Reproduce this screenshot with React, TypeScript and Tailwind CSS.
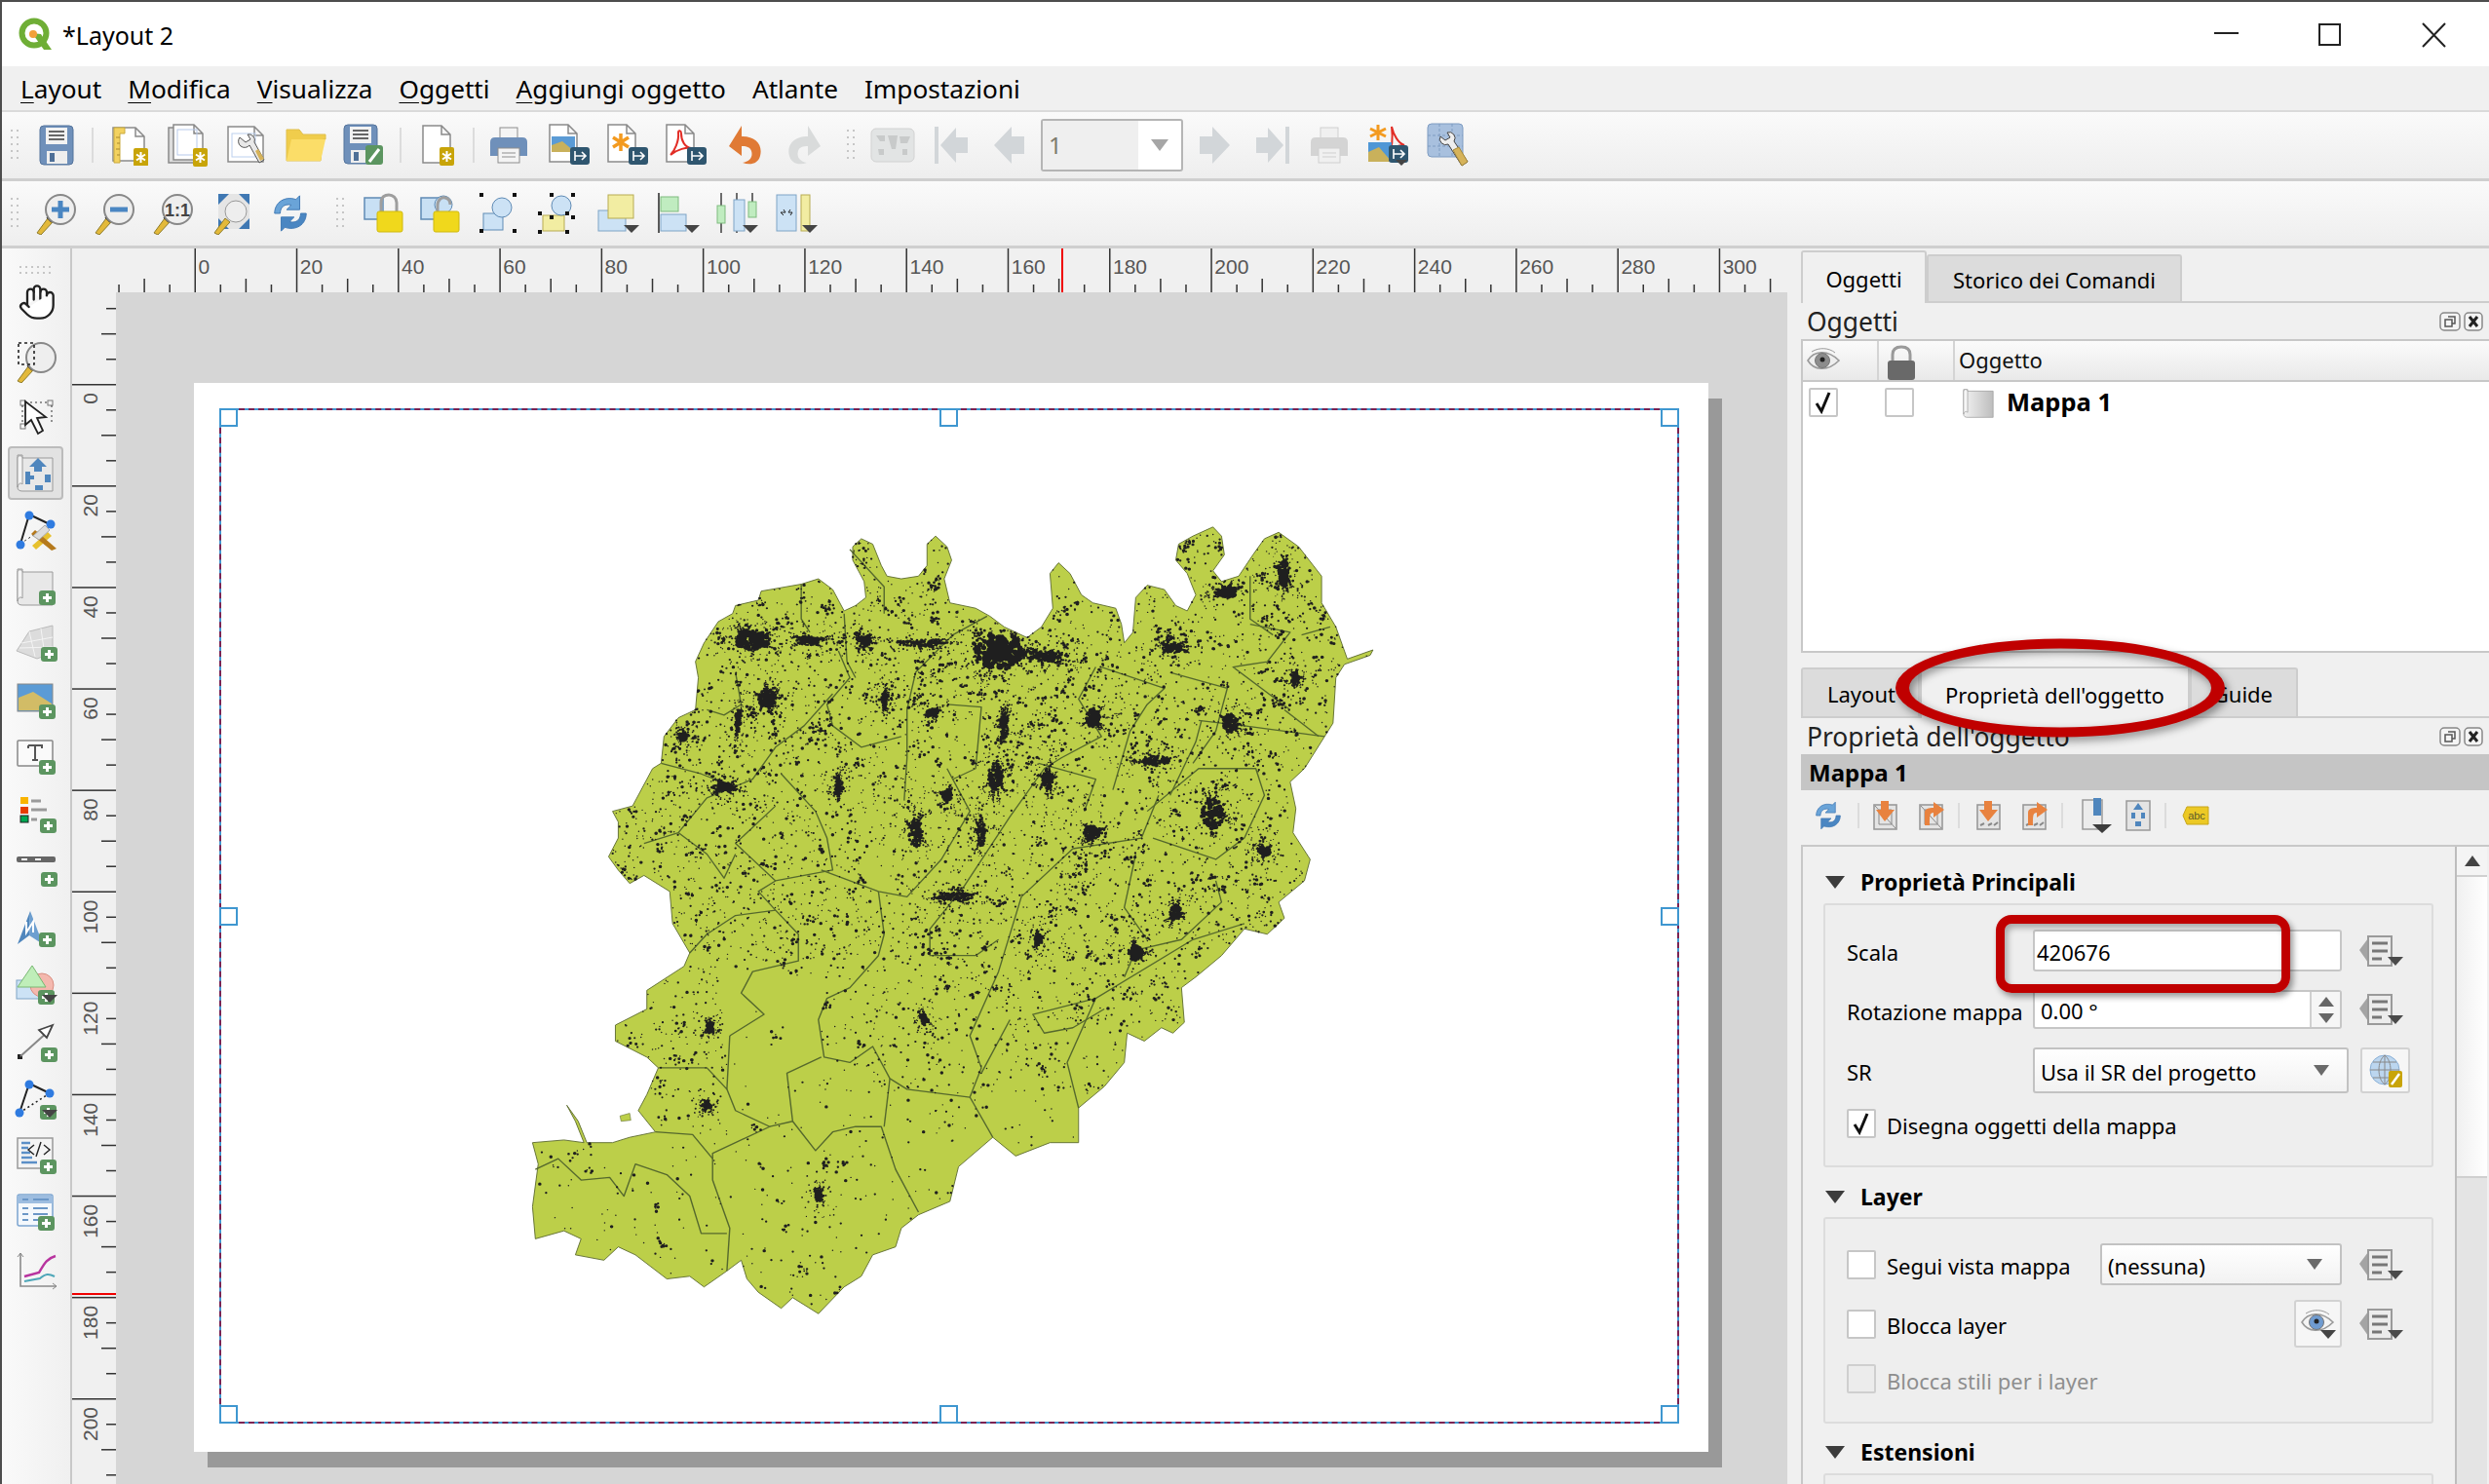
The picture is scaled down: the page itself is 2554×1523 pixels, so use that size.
import React, { useMemo } from "react";
import { Hand } from "lucide-react";

const Svg = ({ w = 44, h = 44, children }: { w?: number; h?: number; children: React.ReactNode }) => (
  <svg width={w} height={h} viewBox={`0 0 ${w} ${h}`} className="block shrink-0">{children}</svg>
);
const Slot = ({ c, children }: { c: string; children?: React.ReactNode }) => (
  <div className={`flex h-full shrink-0 items-center justify-center ${c}`}>{children}</div>
);
const Grip = () => (
  <svg width="8" height="36" viewBox="0 0 8 36" className="block shrink-0">
    {[2, 9, 16, 23, 30].map((y) => (
      <g key={y}><rect x="0" y={y} width="2" height="2" fill="#c6c6c6" /><rect x="6" y={y} width="2" height="2" fill="#c6c6c6" /></g>
    ))}
  </svg>
);
const Sep = () => <div className="h-[36px] w-[2px] bg-[#dcdcdc]" />;

const Doc = ({ x = 3, y = 1, w = 28, h = 38, f = "#fff", s = "#8a8a8a" }: { x?: number; y?: number; w?: number; h?: number; f?: string; s?: string }) => (
  <path d={`M${x} ${y}H${x + w - 9}L${x + w} ${y + 9}V${y + h}H${x}Z M${x + w - 9} ${y}V${y + 9}H${x + w}`} fill={f} stroke={s} strokeWidth="1.5" />
);
const GoldBadge = ({ x = 22, y = 22 }: { x?: number; y?: number }) => (
  <g>
    <rect x={x} y={y} width="15" height="19" rx="2" fill="#c8a408" />
    <path d={`M${x + 7.5} ${y + 4}V${y + 15}M${x + 3} ${y + 6.5}L${x + 12} ${y + 12.5}M${x + 12} ${y + 6.5}L${x + 3} ${y + 12.5}`} stroke="#fff" strokeWidth="2" />
  </g>
);
const ExpBadge = ({ x = 22, y = 24 }: { x?: number; y?: number }) => (
  <g>
    <rect x={x} y={y} width="20" height="18" rx="3" fill="#2f566f" />
    <path d={`M${x + 5} ${y + 4}V${y + 14}M${x + 5} ${y + 9}H${x + 15}M${x + 12} ${y + 5}L${x + 16} ${y + 9}L${x + 12} ${y + 13}`} stroke="#fff" strokeWidth="1.6" fill="none" />
  </g>
);
const Plus = ({ x = 22, y = 22 }: { x?: number; y?: number }) => (
  <g>
    <rect x={x} y={y} width="17" height="15" rx="3" fill="#5c9560" />
    <path d={`M${x + 8.5} ${y + 3}V${y + 12}M${x + 4} ${y + 7.5}H${x + 13}`} stroke="#fff" strokeWidth="3" />
  </g>
);
const DD = ({ x = 30, y = 34, s = 7 }: { x?: number; y?: number; s?: number }) => (
  <path d={`M${x - s} ${y}H${x + s}L${x} ${y + s}Z`} fill="#444" />
);

const SaveBody = ({ dx = 0 }: { dx?: number }) => (
  <g transform={`translate(${dx} 0)`}>
    <rect x="1" y="1" width="34" height="40" rx="4" fill="#6f90ba" stroke="#55749c" />
    <rect x="7" y="3" width="22" height="17" fill="#f2f2f2" />
    <path d="M10 7H26M10 11H26M10 15H26" stroke="#666" strokeWidth="2" />
    <rect x="8" y="27" width="21" height="13" fill="#eee" />
    <rect x="11" y="29" width="5" height="9" fill="#4e6f97" />
  </g>
);
const IconSave = () => <Svg w={37} h={42}><SaveBody /></Svg>;
const IconNewLayout = () => (
  <Svg w={42} h={42}>
    <Doc x={3} y={3} w={32} h={34} />
    <path d="M4 3H15V9H10V39H4Z" fill="#f3d260" stroke="#c9a93b" />
    <path d="M10 13H6M10 19H7M10 25H6M10 31H7" stroke="#a8872b" />
    <GoldBadge x={24} y={24} />
  </Svg>
);
const IconDup = () => (
  <Svg w={44} h={44}>
    <Doc x={1} y={4} w={30} h={36} f="#ddd" />
    <Doc x={6} y={1} w={30} h={36} />
    <rect x="10" y="6" width="20" height="26" fill="none" stroke="#b7c9ea" />
    <GoldBadge x={26} y={25} />
  </Svg>
);
const IconMgr = () => (
  <Svg w={44} h={44}>
    <Doc x={2} y={3} w={36} h={36} />
    <rect x="6" y="10" width="24" height="24" fill="none" stroke="#bcd0ee" />
    <path d="M14 14A6 6 0 0 0 24 22L34 40L39 37L29 19A6 6 0 0 0 22 11L25 16L20 19Z" fill="#e8e8e8" stroke="#555" />
    <path d="M30 28L35 38L39 36L33 26Z" fill="#d6b35a" />
  </Svg>
);
const IconFolder = () => (
  <Svg w={42} h={36}>
    <path d="M1 34V2H14L18 7H41V12H38L36 34Z" fill="#f0cd4c" stroke="#e0bf4b" />
    <path d="M1 34L6 12H41L36 34Z" fill="#fbdd68" />
  </Svg>
);
const IconSaveAs = () => (
  <Svg w={42} h={44}>
    <SaveBody />
    <rect x="23" y="22" width="18" height="20" rx="3" fill="#5c9560" />
    <path d="M27 39L37 26" stroke="#fff" strokeWidth="3" />
  </Svg>
);
const IconNewPage = () => (
  <Svg w={38} h={42}>
    <Doc x={2} y={1} w={28} h={38} />
    <GoldBadge x={19} y={23} />
  </Svg>
);
const Printer = ({ b = "#6f90ba", p = "#f4f4f4", s = "#8e8e8e" }: { b?: string; p?: string; s?: string }) => (
  <Svg w={40} h={38}>
    <rect x="11" y="1" width="18" height="14" fill={p} stroke={s} />
    <path d="M1 16Q1 11 6 11H34Q39 11 39 16V30H1Z" fill={b} />
    <rect x="9" y="22" width="22" height="15" fill={p} stroke={s} />
    <path d="M13 27H27M13 31H27" stroke={s} />
  </Svg>
);
const IconExpImg = () => (
  <Svg w={44} h={44}>
    <Doc x={1} y={1} w={28} h={38} />
    <rect x="3" y="13" width="24" height="16" fill="#5b9bd5" />
    <path d="M3 29V22L14 18L27 29Z" fill="#c9b15b" />
    <ExpBadge x={22} y={24} />
  </Svg>
);
const IconExpSvg = () => (
  <Svg w={44} h={44}>
    <Doc x={1} y={1} w={28} h={38} />
    <path d="M14 10V28M6 14L22 24M22 14L6 24" stroke="#f39a1f" strokeWidth="3.5" />
    <ExpBadge x={22} y={24} />
  </Svg>
);
const IconExpPdf = () => (
  <Svg w={44} h={44}>
    <Doc x={1} y={1} w={28} h={38} />
    <path d="M5 32C9 28 14 18 13 9C13 6 16 7 16 10C16 18 20 24 26 25C22 24 12 26 5 32Z" fill="none" stroke="#e22d26" strokeWidth="2" />
    <ExpBadge x={22} y={24} />
  </Svg>
);
const UndoArrow = ({ f }: { f: string }) => (
  <path d="M1 22L14 1V12C28 12 36 20 33 32C31 40 23 42 15 39C22 38 26 33 24 27C23 23 19 22 14 22V32Z" fill={f} />
);
const IconUndo = () => <Svg w={36} h={42}><UndoArrow f="#e07a35" /></Svg>;
const IconRedo = () => <Svg w={36} h={42}><g transform="translate(36 0) scale(-1 1)"><UndoArrow f="#d9dbdb" /></g></Svg>;
const IconAtlas = () => (
  <Svg w={46} h={36}>
    <rect x="1" y="1" width="44" height="34" rx="5" fill="#e2e4e4" stroke="#d2d2d2" />
    <path d="M6 8H15V14H10ZM18 8H28L26 22H22ZM30 9H41L38 16H31ZM8 22H14V28H9ZM33 22H38V28H33Z" fill="#c8caca" />
  </Svg>
);
const NavShape = ({ d }: { d: string }) => <Svg w={38} h={38}><path d={d} fill="#d2d6d9" /></Svg>;
const IconExpAtlas = () => (
  <Svg w={46} h={44}>
    <path d="M11 1V17M3 5L19 13M19 5L3 13" stroke="#f39a1f" strokeWidth="3" />
    <path d="M22 30C26 24 26 12 25 3C27 12 32 20 38 22C32 22 26 24 22 30Z" fill="none" stroke="#e22d26" strokeWidth="2" />
    <rect x="1" y="19" width="24" height="20" fill="#4f97d6" />
    <path d="M1 39V29L12 24L25 39Z" fill="#c9b15b" />
    <ExpBadge x={22} y={22} />
    <DD x={35} y={37} s={6} />
  </Svg>
);
const IconAtlasCfg = () => (
  <Svg w={46} h={46}>
    <rect x="1" y="1" width="36" height="34" rx="4" fill="#a8c0de" stroke="#7e9cc2" />
    <path d="M1 13H37M1 24H37M13 1V35M26 1V35" stroke="#7e9cc2" strokeDasharray="3 2" />
    <path d="M14 14A6 6 0 0 0 22 22L36 44L42 40L28 19A6 6 0 0 0 21 10L24 15L19 18Z" fill="#eee" stroke="#444" />
    <path d="M27 28L36 44L42 40L33 25Z" fill="#d6b35a" stroke="#a68a3c" />
  </Svg>
);

const Lens = ({ children }: { children?: React.ReactNode }) => (
  <Svg w={44} h={44}>
    <path d="M2 42L13 27L18 31L6 44Z" fill="#e3b93a" stroke="#8d7b2b" />
    <path d="M13 25L18 30" stroke="#111" strokeWidth="4" />
    <circle cx="26" cy="18" r="15" fill="#eee" stroke="#888" strokeWidth="2" />
    {children}
  </Svg>
);
const IconFull = () => (
  <Svg w={44} h={44}>
    <path d="M6 2H38V38H6Z" fill="#e5e5e5" />
    <path d="M6 2H17L6 13ZM38 2H27L38 13ZM6 38H17L6 27ZM38 38H27L38 27Z" fill="#3f78b3" />
    <path d="M2 42L13 27L18 31L6 44Z" fill="#e3b93a" stroke="#8d7b2b" />
    <circle cx="24" cy="20" r="11" fill="#eee" stroke="#999" />
  </Svg>
);
const Refresh = ({ s = 42 }: { s?: number }) => (
  <svg width={s} height={s} viewBox="0 0 44 44" className="block shrink-0">
    <path d="M5 22C5 10 16 3 28 7L32 3V18H18L23 13C15 11 11 16 11 22Z" fill="#6aa4d8" stroke="#3f78b3" />
    <path d="M39 22C39 34 28 41 16 37L12 41V26H26L21 31C29 33 33 28 33 22Z" fill="#4a86c2" stroke="#3f78b3" />
  </svg>
);
const IconLock = ({ open = false }: { open?: boolean }) => (
  <Svg w={44} h={44}>
    <rect x="2" y="6" width="19" height="22" fill="#c8e0f4" stroke="#5f8bb5" strokeWidth="1.5" />
    {open ? <circle cx="25" cy="13" r="9" fill="#c8e0f4" stroke="#5f8bb5" /> : null}
    <path d={open ? "M19 22V14C19 8 23 5 27 6C31 7 32 10 32 13" : "M19 22V11C19 5 23 3 27 3C31 3 35 6 35 11V22"} fill="none" stroke="#9e9e9e" strokeWidth="3" />
    <rect x="15" y="20" width="26" height="21" rx="2" fill="#f0d81c" stroke="#cfb90e" />
  </Svg>
);
const Corners = ({ x0, y0, x1, y1 }: { x0: number; y0: number; x1: number; y1: number }) => (
  <g fill="#111">
    {[[x0, y0], [x1, y0], [x0, y1], [x1, y1]].map(([x, y], i) => <rect key={i} x={x - 2} y={y - 2} width="4" height="4" />)}
  </g>
);
const IconGroup = () => (
  <Svg w={44} h={44}>
    <rect x="6" y="22" width="20" height="17" fill="#cce2f5" stroke="#5f8bb5" />
    <circle cx="25" cy="16" r="10" fill="#cce2f5" stroke="#5f8bb5" />
    <Corners x0={4} y0={3} x1={38} y1={40} />
  </Svg>
);
const IconUngroup = () => (
  <Svg w={44} h={44}>
    <rect x="5" y="24" width="22" height="16" fill="#f2eda2" stroke="#b7ab52" />
    <circle cx="24" cy="14" r="10" fill="#cce2f5" stroke="#5f8bb5" />
    <Corners x0={14} y0={3} x1={36} y1={26} />
    <Corners x0={2} y0={22} x1={30} y1={41} />
  </Svg>
);
const IconRaise = () => (
  <Svg w={46} h={44}>
    <rect x="2" y="19" width="28" height="21" fill="#cce2f5" stroke="#7ea4c6" />
    <rect x="12" y="3" width="26" height="24" fill="#f2eda2" stroke="#b7ab52" />
    <DD x={36} y={34} s={8} />
  </Svg>
);
const IconAlign = () => (
  <Svg w={46} h={44}>
    <path d="M2 1V42" stroke="#333" strokeWidth="1.6" />
    <rect x="4" y="5" width="18" height="15" fill="#c0ecc0" stroke="#7fbb7f" />
    <rect x="4" y="23" width="26" height="17" fill="#cce2f5" stroke="#7ea4c6" />
    <DD x={36} y={34} s={8} />
  </Svg>
);
const IconDist = () => (
  <Svg w={46} h={44}>
    <path d="M6 1V42M22 1V42M38 1V25" stroke="#333" strokeWidth="1.4" />
    <rect x="2" y="14" width="8" height="18" fill="#c0ecc0" stroke="#7fbb7f" />
    <rect x="19" y="8" width="11" height="32" fill="#cce2f5" stroke="#7ea4c6" />
    <rect x="34" y="10" width="8" height="16" fill="#c0ecc0" stroke="#7fbb7f" />
    <DD x={36} y={34} s={8} />
  </Svg>
);
const IconResize = () => (
  <Svg w={46} h={44}>
    <rect x="2" y="3" width="20" height="37" fill="#cce2f5" stroke="#7ea4c6" />
    <rect x="27" y="3" width="9" height="37" fill="#f2eda2" stroke="#b7ab52" />
    <path d="M6 21H11L9 18M18 21H14L16 18M6 21L9 24M18 21L16 24" stroke="#222" fill="none" />
    <DD x={36} y={34} s={8} />
  </Svg>
);

const Scroll = () => (
  <g>
    <path d="M7 2H2V35C2 38 4 39 7 39H38V5H7Z" fill="#e8e8e8" stroke="#9a9a9a" />
    <path d="M2 5C2 2 7 2 7 5V32C5 30 3 31 2 35Z" fill="#f4f4f4" stroke="#9a9a9a" />
  </g>
);
const IconSelect = () => (
  <Svg w={38} h={40}>
    <rect x="2" y="2" width="5" height="5" fill="none" stroke="#777" />
    <rect x="30" y="2" width="5" height="5" fill="none" stroke="#777" />
    <rect x="2" y="26" width="5" height="5" fill="none" stroke="#777" />
    <path d="M7 4H30M34 7V26M4 7V26" stroke="#333" strokeDasharray="2 3" />
    <path d="M7 3V27L13 22L20 36L25 33L19 20L28 19Z" fill="#fff" stroke="#222" strokeWidth="1.8" />
  </Svg>
);
const IconMove = () => (
  <Svg w={40} h={40}>
    <Scroll />
    <path d="M23 5L32 14H27V19H19V14H14Z" fill="#4f86bd" />
    <path d="M10 19H15V23H19V27H15V32H10Z" fill="#4f86bd" />
    <rect x="30" y="22" width="6" height="8" fill="#4f86bd" />
    <rect x="20" y="33" width="8" height="5" fill="#4f86bd" />
  </Svg>
);
const IconEditNodes = () => (
  <Svg w={44} h={44}>
    <path d="M14 4L5 34M14 4L35 14" stroke="#222" strokeWidth="2" />
    <path d="M5 34L35 14" stroke="#222" strokeDasharray="2 3" />
    <circle cx="14" cy="5" r="4.5" fill="#2f7be0" />
    <circle cx="36" cy="14" r="4.5" fill="#2f7be0" />
    <circle cx="5" cy="35" r="4.5" fill="#2f7be0" />
    <path d="M17 36L33 22L37 26L21 40Z" fill="#e7c12e" />
    <path d="M20 20L42 39L37 41L16 24Z" fill="#b5791c" />
    <path d="M18 26L30 15L35 20L24 30Z" fill="#ddd" stroke="#aaa" />
  </Svg>
);
const IconAddMap = () => <Svg w={44} h={44}><Scroll /><Plus x={24} y={24} /></Svg>;
const IconAdd3d = () => (
  <Svg w={44} h={44}>
    <path d="M1 28L14 8L38 2V30L22 36Z" fill="#dcdcdc" stroke="#bbb" />
    <path d="M14 8L20 34M26 5L30 33M6 20L38 14M4 25L38 24" stroke="#f4f4f4" />
    <Plus x={26} y={24} />
  </Svg>
);
const IconAddPic = () => (
  <Svg w={44} h={44}>
    <rect x="2" y="3" width="36" height="28" fill="#5b9bd5" stroke="#888" />
    <path d="M3 30V17L18 11L37 23V30Z" fill="#d2bc66" />
    <Plus x={24} y={24} />
  </Svg>
);
const IconAddText = () => (
  <Svg w={44} h={44}>
    <rect x="2" y="3" width="36" height="26" rx="1" fill="#fafafa" stroke="#888" strokeWidth="1.5" />
    <path d="M13 8H27V11M20 8V23M17 23H23M13 8V11" stroke="#555" strokeWidth="2" fill="none" />
    <Plus x={24} y={23} />
  </Svg>
);
const IconLegend = () => (
  <Svg w={44} h={40}>
    <rect x="5" y="1" width="8" height="7" fill="#f9b400" />
    <rect x="5" y="11" width="8" height="7" fill="#e63c00" />
    <rect x="5" y="20" width="8" height="7" fill="#00a651" stroke="#222" />
    <path d="M16 5H26M16 14H32M16 24H22" stroke="#9a9a9a" strokeWidth="3" />
    <Plus x={25} y={23} />
  </Svg>
);
const IconScale = () => (
  <Svg w={44} h={42}>
    <rect x="1" y="4" width="40" height="6" rx="2" fill="#666" />
    <path d="M6 7H12M20 7H26" stroke="#fff" strokeWidth="2" />
    <Plus x={26} y={20} />
  </Svg>
);
const IconNorth = () => (
  <Svg w={44} h={42}>
    <path d="M15 2L2 36L14 27Z" fill="#4f86bd" />
    <path d="M15 2L28 36L14 27Z" fill="#6d9fd0" />
    <path d="M11 13V24L18 13V24" stroke="#fff" strokeWidth="2" fill="none" />
    <Plus x={24} y={24} />
  </Svg>
);
const IconShape = () => (
  <Svg w={46} h={44}>
    <rect x="2" y="16" width="32" height="19" fill="#cce2f5" stroke="#7ea4c6" />
    <circle cx="28" cy="21" r="12" fill="#f4b8ae" stroke="#d88d80" />
    <path d="M18 1L3 23H32Z" fill="#bfeeb9" stroke="#79b873" />
    <Plus x={24} y={26} />
    <DD x={36} y={31} s={8} />
  </Svg>
);
const IconArrow = () => (
  <Svg w={44} h={42}>
    <rect x="2" y="32" width="5" height="5" fill="#222" />
    <path d="M5 34L34 8" stroke="#888" strokeWidth="2" />
    <path d="M38 2L24 7L32 15Z" fill="#fff" stroke="#444" strokeWidth="1.8" />
    <Plus x={26} y={25} />
  </Svg>
);
const IconNodes = () => (
  <Svg w={46} h={42}>
    <path d="M15 4L5 34M15 4L36 14" stroke="#222" strokeWidth="2" />
    <path d="M5 34L36 14" stroke="#222" strokeDasharray="2 3" strokeWidth="1.6" />
    <circle cx="15" cy="5" r="4.5" fill="#2f7be0" />
    <circle cx="36" cy="14" r="4.5" fill="#2f7be0" />
    <circle cx="5" cy="34" r="4.5" fill="#2f7be0" />
    <Plus x={26} y={26} />
    <DD x={36} y={31} s={8} />
  </Svg>
);
const IconHtml = () => (
  <Svg w={44} h={42}>
    <rect x="2" y="2" width="36" height="31" fill="#f4f4f4" stroke="#999" strokeWidth="1.5" />
    <path d="M6 7H15M6 12H13M6 17H15M6 22H17M6 27H22" stroke="#5b8fc7" strokeWidth="2.5" />
    <path d="M19 9L13 14L19 19M29 9L35 14L29 19M26 6L21 21" fill="none" stroke="#222" strokeWidth="1.4" />
    <Plus x={25} y={24} />
  </Svg>
);
const IconTable = () => (
  <Svg w={44} h={42}>
    <rect x="2" y="2" width="36" height="32" rx="2" fill="#f4f8fc" stroke="#7ba4d0" strokeWidth="1.5" />
    <rect x="2" y="3" width="36" height="8" fill="#9dbde0" />
    <path d="M7 7H13M18 7H34M7 16H13M18 16H33M7 22H13M18 22H33M7 28H13M18 28H25" stroke="#6b97c7" strokeWidth="2" />
    <Plus x={23} y={24} />
  </Svg>
);
const IconChart = () => (
  <Svg w={44} h={40}>
    <path d="M5 2V36H42" fill="none" stroke="#8a8a8a" strokeWidth="1.6" />
    <path d="M2 6L5 2L8 6M38 33L42 36L38 39" fill="none" stroke="#8a8a8a" />
    <path d="M9 26L24 22C29 14 31 8 41 5" fill="none" stroke="#b8349f" strokeWidth="2.4" />
    <path d="M9 31L25 28C31 23 34 23 40 26" fill="none" stroke="#4da6b8" strokeWidth="2" />
  </Svg>
);

const MiniFrame = ({ mode }: { mode: number }) => (
  <Svg w={30} h={32}>
    <rect x="3" y="5" width="23" height="25" fill="#e4e4e4" stroke="#999" strokeWidth="1.6" />
    {mode < 2 ? <path d="M4 6L25 29M8 10H21V25H8Z" fill="none" stroke="#8a8a8a" /> : <path d="M6 26L10 24M14 26L18 24M20 26L24 23" stroke="#888" strokeWidth="2" />}
    {mode % 2 === 0
      ? <path d="M10 1H18V10H24L14 22L5 10H10Z" fill="#e8823f" />
      : <path d="M8 26V13C8 9 12 8 17 8V2L28 10L17 18V13C13 13 13 16 13 26Z" fill="#e8823f" />}
  </Svg>
);
const Override = () => (
  <Svg w={47} h={36}>
    <path d="M1 17L10 5V30Z" fill="#a4a4a4" />
    <path d="M10 3H34V33H10Z" fill="#ececec" stroke="#9a9a9a" strokeWidth="2" />
    <path d="M14 10H30M14 18H30M14 26H24" stroke="#777" strokeWidth="3" />
    <path d="M30 24H46L38 33Z" fill="#4a4a4a" />
  </Svg>
);
const Eye = ({ iris, bg }: { iris: string; bg: string }) => (
  <g>
    <path d="M1 14C7 4 21 2 33 14C21 26 7 24 1 14Z" fill={bg} stroke="#9a9a9a" strokeWidth="1.6" />
    <path d="M5 5C13 0 23 1 29 6" fill="none" stroke="#9a9a9a" />
    <circle cx="16" cy="14" r="7.5" fill={iris} stroke="#777" />
    <circle cx="16" cy="13" r="2.5" fill="#222" />
  </g>
);
const Check = ({ checked = false, disabled = false }: { checked?: boolean; disabled?: boolean }) => (
  <div className={`flex h-[30px] w-[30px] shrink-0 items-center justify-center rounded-[2px] border-2 ${disabled ? "border-[#cfcfcf] bg-[#ececec]" : "border-[#c6c6c6] bg-white"}`}>
    {checked ? <svg width="18" height="24" viewBox="0 0 18 24"><path d="M2 13L7 21L15 2" fill="none" stroke="#111" strokeWidth="3" /></svg> : null}
  </div>
);
const Tri = ({ c = "#444", s = 8 }: { c?: string; s?: number }) => (
  <svg width={s * 2} height={s + 3} viewBox={`0 0 ${s * 2} ${s + 3}`} className="block shrink-0"><path d={`M0 0H${s * 2}L${s} ${s + 3}Z`} fill={c} /></svg>
);
const SectionHead = ({ label, c }: { label: string; c: string }) => (
  <div className={`flex items-center pl-[23px] ${c}`}>
    <Tri c="#3c3c3c" s={10} />
    <span className="ml-[16px] text-[23px] font-bold leading-none text-black">{label}</span>
  </div>
);
const Combo = ({ label, c }: { label: string; c: string }) => (
  <div className={`flex items-center justify-between rounded-[3px] border-2 border-[#c2c2c2] bg-gradient-to-b from-white to-[#f2f2f2] pl-[6px] pr-[18px] ${c}`}>
    <span className="pt-[2px] text-[22px] leading-none text-black">{label}</span>
    <Tri c="#6a6a6a" s={8} />
  </div>
);
const DockTitle = ({ label }: { label: string }) => (
  <div className="flex h-[37px] shrink-0 items-center justify-between pl-[6px] pr-[6px]">
    <span className="pt-[2px] text-[26.4px] leading-none text-[#222]">{label}</span>
    <div className="flex gap-[3px]">
      <svg width="22" height="20" viewBox="0 0 22 20"><rect x="1" y="1" width="20" height="18" rx="4" fill="#f4f4f4" stroke="#888" strokeWidth="1.5" /><path d="M9 5H16V12H13M6 8H13V15H6Z" fill="none" stroke="#555" strokeWidth="1.5" /></svg>
      <svg width="20" height="20" viewBox="0 0 20 20"><rect x="1" y="1" width="18" height="18" rx="4" fill="#f4f4f4" stroke="#888" strokeWidth="1.5" /><path d="M6 5L14 15M14 5L6 15" stroke="#222" strokeWidth="3" /></svg>
    </div>
  </div>
);

const topMajor = Array.from({ length: 16 }, (_, i) => i * 20);
const TopRuler = () => {
  const ticks: React.ReactNode[] = [];
  for (let mm = -15; mm <= 311; mm += 5) {
    const x = 80.5 + mm * 5.214;
    if (mm % 20 === 0) continue;
    const h = mm % 10 === 0 ? 14 : 8;
    ticks.push(<rect key={mm} x={x} y={45 - h} width="1.5" height={h} fill="#333" />);
  }
  return (
    <svg width="1713" height="45" viewBox="0 0 1713 45" className="block" fontFamily="Liberation Sans, sans-serif">
      {ticks}
      {topMajor.map((mm) => {
        const x = 80.5 + mm * 5.214;
        return (
          <g key={mm}>
            <rect x={x} y="0" width="1.5" height="45" fill="#333" />
            <text x={x + 4} y="26" fontSize="21" fill="#555">{mm}</text>
          </g>
        );
      })}
      <rect x="970" y="0" width="2" height="45" fill="#f00000" />
    </svg>
  );
};
const LeftRuler = () => {
  const ticks: React.ReactNode[] = [];
  for (let mm = -15; mm <= 215; mm += 5) {
    const y = 94 + mm * 5.205;
    if (mm % 20 === 0) {
      ticks.push(<rect key={mm} x="0" y={y} width="45" height="1.5" fill="#333" />);
      if (mm >= 0) ticks.push(<text key={`t${mm}`} transform={`translate(26 ${y + 9}) rotate(-90)`} textAnchor="end" fontSize="21" fill="#555">{mm}</text>);
    } else {
      const w = mm % 10 === 0 ? 15 : 10;
      ticks.push(<rect key={mm} x={45 - w} y={y} width={w} height="1.5" fill="#333" />);
    }
  }
  return (
    <svg width="45" height="1223" viewBox="0 0 45 1223" className="block" fontFamily="Liberation Sans, sans-serif">
      {ticks}
      <rect x="0" y="1027" width="45" height="2" fill="#f00000" />
    </svg>
  );
};

const OUTLINE: [number, number][] = [[330,290],[345,255],[370,215],[395,200],[400,185],[440,175],[445,158],[515,145],[545,135],[570,155],[590,195],[610,185],[628,170],[625,140],[605,100],[605,75],[620,60],[640,70],[655,110],[665,130],[690,135],[720,130],[735,110],[735,70],[750,55],[770,75],[778,100],[765,135],[775,180],[820,190],[845,205],[870,225],[910,245],[935,225],[955,190],[950,125],[965,105],[985,125],[1005,165],[1025,180],[1065,190],[1075,220],[1080,255],[1095,235],[1100,170],[1120,147],[1150,155],[1170,185],[1190,195],[1205,165],[1190,125],[1170,100],[1175,70],[1200,55],[1235,38],[1250,55],[1255,90],[1235,120],[1250,140],[1280,130],[1305,90],[1325,60],[1350,48],[1385,75],[1425,130],[1425,180],[1450,225],[1465,270],[1470,285],[1515,268],[1510,278],[1465,295],[1450,320],[1445,405],[1395,490],[1370,515],[1380,565],[1375,610],[1405,660],[1395,700],[1350,740],[1360,770],[1330,800],[1290,790],[1250,840],[1205,880],[1180,900],[1185,965],[1165,985],[1145,975],[1115,1000],[1085,985],[1080,1040],[1045,1085],[1000,1125],[1000,1190],[950,1190],[890,1215],[850,1180],[790,1235],[775,1300],[720,1325],[690,1350],[680,1385],[640,1400],[620,1440],[590,1460],[545,1510],[500,1480],[480,1500],[440,1470],[420,1445],[410,1410],[385,1430],[345,1460],[320,1440],[280,1445],[225,1400],[195,1385],[170,1410],[120,1400],[130,1370],[100,1355],[50,1370],[45,1310],[55,1230],[45,1190],[100,1185],[135,1190],[120,1150],[105,1120],[125,1150],[140,1190],[185,1190],[215,1180],[260,1170],[230,1130],[245,1100],[265,1050],[245,1030],[190,1000],[190,970],[245,940],[245,905],[310,860],[320,835],[290,780],[285,720],[240,690],[215,705],[195,680],[178,655],[195,620],[195,590],[185,570],[220,560],[255,490],[270,480],[275,430],[300,395],[330,380],[335,320]];
const LINES = [
  "515,145 515,210 530,235","590,200 595,290 610,320","840,205 780,240 715,310 700,380 700,470 695,550","570,350 520,410 470,450 430,510 350,545 300,610 240,630","270,480 340,500 400,525","400,310 410,370 380,390 350,380","580,270 600,320 560,370 570,410 620,450 690,430","480,500 540,570 560,620 570,680 470,700 400,630 470,560","300,610 350,650 380,695 400,650","470,700 440,720 470,755 510,800 510,850 430,870 410,910 450,950 390,990","470,755 400,765 350,800 320,835","1030,300 1000,360 1040,430 970,470 940,490 880,580 800,710 740,790 740,840 820,840 860,810","650,720 660,800 650,840 600,900 560,920 545,960 555,1030 600,1040 640,1010 670,1070 700,1090 810,1105 830,1050 810,990 860,870 900,730 990,640 1110,620 1140,540","390,990 385,1090 350,1050 265,1050","385,1090 400,1130 460,1160 360,1210 360,1260 390,1350 385,1430","260,1170 325,1175 360,1220","50,1240 90,1220 130,1260 180,1255 205,1290 225,1230 280,1250 320,1290 340,1360 385,1360","460,1160 500,1150 490,1060 550,1030","500,1150 540,1205 570,1170 610,1160 655,1160 680,1240 720,1320","670,1070 660,1160","810,1105 850,1180","1045,940 990,975 940,985 920,950 1030,920 1200,810 1290,780","1030,920 980,1040 1000,1125","880,960 840,1040 830,1060","1240,700 1250,740 1180,810 1100,830 1080,880","1130,620 1240,660 1290,620 1325,540 1310,490 1210,490 1120,570","1100,650 1080,750 1120,810","1040,300 1150,340 1120,370 1090,420 1060,530","1160,310 1260,340 1240,420 1200,480","1210,400 1290,410 1430,430","1360,380 1420,430","1300,220 1370,235 1330,290 1270,300 1370,380","1440,225 1390,240","770,370 830,375 820,490 780,510","930,480 1030,510 1010,570","1215,400 1205,440 1160,540","1300,130 1300,210 1340,240","600,80 660,150 660,200","770,490 810,570 760,660 700,730 650,720 550,680",
];
const CLUSTERS: [number, number, number, number][] = [[430,250,30,20],[530,250,24,9],[860,270,48,35],[935,280,48,12],[720,255,42,7],[625,250,12,8],[455,360,16,18],[380,525,22,9],[580,525,6,18],[715,610,12,28],[785,730,30,8],[830,610,7,28],[855,505,13,26],[945,510,10,20],[1025,610,16,13],[1025,395,13,18],[1135,475,26,9],[1235,575,20,28],[1265,405,13,18],[1165,265,18,9],[1260,160,18,11],[1360,125,11,26],[1100,835,13,15],[1170,760,10,15],[1325,645,11,9],[355,975,7,11],[730,960,5,11],[350,1120,6,7],[545,1290,6,11],[930,810,7,11],[770,540,9,11],[660,360,5,15],[745,385,11,7],[405,400,4,25],[1380,320,6,9],[310,430,6,9],[870,410,7,25]];

const MapDrawing = () => {
  const { outline, dots } = useMemo(() => {
    let seed = 12345;
    const rnd = () => { seed = (seed * 1664525 + 1013904223) % 4294967296; return seed / 4294967296; };
    const inside = (x: number, y: number) => {
      let c = false;
      for (let i = 0, j = OUTLINE.length - 1; i < OUTLINE.length; j = i++) {
        const [xi, yi] = OUTLINE[i];
        const [xj, yj] = OUTLINE[j];
        if (yi > y !== yj > y && x < ((xj - xi) * (y - yi)) / (yj - yi) + xi) c = !c;
      }
      return c;
    };
    const circ = (x: number, y: number, r: number) => {
      const q = +r.toFixed(1);
      return `M${(x - q).toFixed(1)} ${y.toFixed(1)}a${q} ${q} 0 1 0 ${2 * q} 0a${q} ${q} 0 1 0 ${-2 * q} 0`;
    };
    const parts: string[] = [];
    for (let i = 0; i < 13000; i++) {
      const x = 40 + rnd() * 1480;
      const y = 40 + rnd() * 1470;
      let keep = y < 500 ? 0.85 : y < 850 ? 0.9 : y < 1100 ? 0.6 : 0.18;
      if (x > 380 && x < 550 && y > 880 && y < 1110) keep = 0.05;
      if (rnd() > keep || !inside(x, y)) continue;
      const k = rnd();
      const r = k < 0.6 ? 1.3 : k < 0.9 ? 2 : 3;
      parts.push(circ(x, y, r));
      if (rnd() < (y < 500 ? 0.1 : 0.05)) {
        const n = 3 + Math.floor(rnd() * 4);
        for (let j = 0; j < n; j++) {
          const px = x + (rnd() - 0.5) * 18;
          const py = y + (rnd() - 0.5) * 18;
          if (inside(px, py)) parts.push(circ(px, py, 1.6 + rnd() * 1.6));
        }
      }
    }
    for (const [cx, cy, rx, ry] of CLUSTERS) {
      const base = Math.min(rx, ry);
      for (let i = 0; i < 70; i++) {
        const a = rnd() * Math.PI * 2;
        const d = Math.sqrt(rnd());
        parts.push(circ(cx + Math.cos(a) * d * rx, cy + Math.sin(a) * d * ry, 1.6 + base * 0.24 * (1 - d * 0.7) * (0.5 + rnd())));
      }
      const arms = 5 + Math.floor(rnd() * 4);
      for (let m = 0; m < arms; m++) {
        const a = rnd() * Math.PI * 2;
        const len = 0.9 + rnd() * 0.9;
        for (let t = 0; t < 14; t++) {
          const u = (t / 14) * len + 0.5;
          const x = cx + Math.cos(a) * u * rx + (rnd() - 0.5) * 4;
          const y = cy + Math.sin(a) * u * ry + (rnd() - 0.5) * 4;
          if (inside(x, y)) parts.push(circ(x, y, 3.2 - u * 1.1 > 1 ? 3.2 - u * 1.1 : 1));
        }
      }
      for (let i = 0; i < 40; i++) {
        const a = rnd() * Math.PI * 2;
        const d = 1 + rnd() * rnd() * 4;
        const x = cx + Math.cos(a) * (rx * d + 6);
        const y = cy + Math.sin(a) * (ry * d + 6);
        if (inside(x, y)) parts.push(circ(x, y, 0.9 + rnd() * 1.1));
      }
    }
    return { outline: OUTLINE.map((p) => p.join(",")).join(" "), dots: parts.join("") };
  }, []);
  return (
    <svg viewBox="0 0 1568 1568" preserveAspectRatio="none" className="absolute left-[321px] top-[127px] h-[860px] w-[920px]">
      <polygon points={outline} fill="#bccf49" stroke="#5d6b30" strokeWidth="1.6" strokeLinejoin="round" />
      {LINES.map((l, i) => <polyline key={i} points={l} fill="none" stroke="#55682d" strokeWidth="2.4" strokeLinejoin="round" />)}
      <path d={dots} fill="#1f1f1f" />
      <polygon points="198,1140 215,1135 217,1148 200,1150" fill="#bccf49" stroke="#5d6b30" />
    </svg>
  );
};

const Handle = ({ c }: { c: string }) => <div className={`absolute h-[19px] w-[19px] border-2 border-[#3f97d0] ${c}`} />;

const Menu = ({ hot, rest }: { hot: string; rest: string }) => (
  <span><span className="underline decoration-1 underline-offset-[4px]">{hot}</span>{rest}</span>
);

export default function App() {
  return (
    <div className="relative flex h-[1523px] w-[2554px] flex-col overflow-hidden bg-[#f0f0f0] font-['Noto_Sans','Open_Sans',sans-serif] text-black">
      {/* title bar */}
      <div className="flex h-[68px] shrink-0 items-center bg-white pl-[18px] pt-[4px]">
        <svg width="36" height="36" viewBox="0 0 36 36" className="shrink-0">
          <circle cx="17" cy="16" r="12.5" fill="none" stroke="#6fae36" strokeWidth="6" />
          <path d="M15 16L27 33H35L24 17Z" fill="#6fae36" />
          <circle cx="16" cy="17" r="4" fill="#f2a13a" />
        </svg>
        <span className="ml-[10px] text-[25px] leading-none">*Layout 2</span>
        <div className="flex-1" />
        <svg width="240" height="30" viewBox="0 0 240 30" className="mr-[42px]" fill="none" stroke="#222" strokeWidth="2">
          <path d="M0 13H25" />
          <rect x="108" y="4" width="21" height="21" />
          <path d="M214 3L237 27M237 3L214 27" />
        </svg>
      </div>
      {/* menu */}
      <div className="flex h-[47px] shrink-0 items-center gap-[27px] border-b-2 border-[#dadada] pl-[21px] pt-[2px] text-[26.2px] leading-none">
        <Menu hot="L" rest="ayout" />
        <Menu hot="M" rest="odifica" />
        <Menu hot="V" rest="isualizza" />
        <Menu hot="O" rest="ggetti" />
        <Menu hot="A" rest="ggiungi oggetto" />
        <span>Atlante</span>
        <span>Impostazioni</span>
      </div>
      {/* toolbar 1 */}
      <div className="flex h-[71px] shrink-0 items-center border-b-[3px] border-[#cfcfcf] bg-gradient-to-b from-[#fafafa] to-[#eeeeee]">
        <Slot c="w-[30px]"><Grip /></Slot>
        <Slot c="w-[56px]"><IconSave /></Slot>
        <Slot c="w-[18px]"><Sep /></Slot>
        <Slot c="w-[60px]"><IconNewLayout /></Slot>
        <Slot c="w-[59px]"><IconDup /></Slot>
        <Slot c="w-[61px]"><IconMgr /></Slot>
        <Slot c="w-[59px]"><IconFolder /></Slot>
        <Slot c="w-[60px]"><IconSaveAs /></Slot>
        <Slot c="w-[16px]"><Sep /></Slot>
        <Slot c="w-[64px]"><IconNewPage /></Slot>
        <Slot c="w-[6px]"><Sep /></Slot>
        <Slot c="w-[66px]"><Printer /></Slot>
        <Slot c="w-[60px]"><IconExpImg /></Slot>
        <Slot c="w-[60px]"><IconExpSvg /></Slot>
        <Slot c="w-[60px]"><IconExpPdf /></Slot>
        <Slot c="w-[60px]"><IconUndo /></Slot>
        <Slot c="w-[60px]"><IconRedo /></Slot>
        <Slot c="w-[36px]"><Grip /></Slot>
        <Slot c="w-[50px]"><IconAtlas /></Slot>
        <Slot c="w-[70px]"><NavShape d="M2 0H6V38H2ZM8 19L24 1V11H36V27H24V37Z" /></Slot>
        <Slot c="w-[50px]"><NavShape d="M3 19L21 0V10H34V28H21V38Z" /></Slot>
        <div className="ml-[7px] flex h-[54px] w-[146px] shrink-0 rounded-[3px] border-2 border-[#b5b5b5] bg-white">
          <div className="flex flex-1 items-center bg-[#efefef] pl-[6px] text-[24px] leading-none text-[#7d7a6c]">1</div>
          <div className="flex w-[44px] items-center justify-center"><Tri c="#a6a6a6" s={9} /></div>
        </div>
        <Slot c="w-[64px]"><NavShape d="M35 19L17 0V10H4V28H17V38Z" /></Slot>
        <Slot c="w-[56px]"><NavShape d="M32 0H36V38H32ZM30 19L14 1V11H2V27H14V37Z" /></Slot>
        <Slot c="w-[60px]"><Printer b="#d4d4d4" p="#f0f0f0" s="#cfcfcf" /></Slot>
        <Slot c="w-[64px]"><IconExpAtlas /></Slot>
        <Slot c="w-[58px]"><IconAtlasCfg /></Slot>
      </div>
      {/* toolbar 2 */}
      <div className="flex h-[69px] shrink-0 items-center border-b-[3px] border-[#cfcfcf] bg-gradient-to-b from-[#fafafa] to-[#eeeeee]">
        <Slot c="w-[30px]"><Grip /></Slot>
        <Slot c="w-[56px]"><Lens><path d="M26 9V27M17 18H35" stroke="#4a86c2" strokeWidth="5" /></Lens></Slot>
        <Slot c="w-[64px]"><Lens><path d="M17 18H35" stroke="#4a86c2" strokeWidth="5" /></Lens></Slot>
        <Slot c="w-[56px]"><Lens><text x="26" y="25" textAnchor="middle" fontSize="18" fontWeight="700" fill="#444" fontFamily="Liberation Sans, sans-serif">1:1</text></Lens></Slot>
        <Slot c="w-[68px]"><IconFull /></Slot>
        <Slot c="w-[48px]"><Refresh /></Slot>
        <Slot c="w-[54px]"><Grip /></Slot>
        <Slot c="w-[36px]"><IconLock /></Slot>
        <Slot c="w-[80px]"><IconLock open /></Slot>
        <Slot c="w-[40px]"><IconGroup /></Slot>
        <Slot c="w-[84px]"><IconUngroup /></Slot>
        <Slot c="w-[38px]"><IconRaise /></Slot>
        <Slot c="w-[86px]"><IconAlign /></Slot>
        <Slot c="w-[34px]"><IconDist /></Slot>
        <Slot c="w-[88px]"><IconResize /></Slot>
      </div>
      {/* main */}
      <div className="flex min-h-0 flex-1">
        {/* left toolbar */}
        <div className="flex w-[74px] shrink-0 flex-col items-center border-r-2 border-[#c8c8c8] bg-gradient-to-r from-[#fafafa] to-[#f0f0f0]">
          <div className="flex h-[26px] items-end justify-center">
            <svg width="32" height="8" viewBox="0 0 32 8"><path d="M0 1H32M0 7H32" stroke="#c6c6c6" strokeWidth="2" strokeDasharray="2 4" /></svg>
          </div>
          {[
            <Hand key="a" size={40} strokeWidth={1.4} fill="#fff" color="#222" />,
            <Lens key="b"><rect x="3" y="3" width="16" height="22" fill="none" stroke="#222" strokeWidth="1.6" strokeDasharray="3 3" /></Lens>,
            <IconSelect key="c" />,
            <div key="d" className="flex h-[55px] w-[57px] items-center justify-center rounded-[4px] border-2 border-[#bcbcbc] bg-[#e2e2e2]"><IconMove /></div>,
            <IconEditNodes key="e" />,
            <IconAddMap key="f" />,
            <IconAdd3d key="g" />,
            <IconAddPic key="h" />,
            <IconAddText key="i" />,
            <IconLegend key="j" />,
            <IconScale key="k" />,
            <IconNorth key="l" />,
            <IconShape key="m" />,
            <IconArrow key="n" />,
            <IconNodes key="o" />,
            <IconHtml key="p" />,
            <IconTable key="q" />,
            <IconChart key="r" />,
          ].map((el, i) => (
            <div key={i} className={`flex h-[58.3px] w-full shrink-0 items-center justify-center ${i === 3 ? "" : i === 0 ? "pl-[3px]" : "pl-[3px] pt-[5px]"}`}>{el}</div>
          ))}
        </div>
        {/* centre */}
        <div className="flex w-[1760px] shrink-0 flex-col">
          <div className="flex h-[45px] shrink-0 overflow-hidden">
            <div className="w-[45px] shrink-0" />
            <TopRuler />
          </div>
          <div className="flex min-h-0 flex-1">
            <div className="w-[45px] shrink-0 overflow-hidden"><LeftRuler /></div>
            <div className="min-w-0 flex-1 overflow-hidden bg-[#d6d6d6] pl-[80px] pt-[93px]">
              <div className="relative h-[1097px] w-[1554px] bg-white shadow-[14px_16px_0_0_#999999]">
                <MapDrawing />
                <div className="absolute left-[26px] top-[26px] h-[1042px] w-[1498px] border-2 border-[#3f97d0]">
                  <div className="absolute -inset-[2px] border-2 border-dashed border-[#7b2352]" />
                  <Handle c="left-[-2px] top-[-2px]" />
                  <Handle c="left-[737px] top-[-2px]" />
                  <Handle c="right-[-2px] top-[-2px]" />
                  <Handle c="left-[-2px] top-[510px]" />
                  <Handle c="right-[-2px] top-[510px]" />
                  <Handle c="bottom-[-2px] left-[-2px]" />
                  <Handle c="bottom-[-2px] left-[737px]" />
                  <Handle c="bottom-[-2px] right-[-2px]" />
                </div>
              </div>
            </div>
          </div>
        </div>
        {/* dock */}
        <div className="flex min-w-0 flex-1 flex-col pl-[14px] pt-[2px]">
          <div className="flex h-[54px] shrink-0 items-end border-b-2 border-[#cdcdcd]">
            <div className="-mb-[2px] flex h-[54px] w-[129px] items-center justify-center rounded-t-[3px] border-x-2 border-t-2 border-[#cdcdcd] bg-[#f0f0f0] pt-[2px] text-[22px] leading-none">Oggetti</div>
            <div className="flex h-[48px] w-[262px] items-center justify-center rounded-t-[3px] border-x-2 border-t-2 border-[#cdcdcd] bg-[#dcdcdc] pt-[2px] text-[22px] leading-none">Storico dei Comandi</div>
          </div>
          <DockTitle label="Oggetti" />
          <div className="flex h-[322px] shrink-0 flex-col border-2 border-r-0 border-[#c8c8c8] bg-white">
            <div className="flex h-[42px] shrink-0 border-b-2 border-[#c8c8c8] bg-gradient-to-b from-[#fbfbfb] to-[#e9e9e9]">
              <div className="flex w-[78px] items-center border-r-2 border-[#d4d4d4] pl-[4px]">
                <svg width="34" height="28" viewBox="0 0 34 28"><Eye iris="#8c8c8c" bg="#eee" /></svg>
              </div>
              <div className="flex w-[78px] items-end border-r-2 border-[#d4d4d4] pl-[8px]">
                <svg width="30" height="36" viewBox="0 0 30 36"><path d="M6 18V10C6 4 10 2 15 2C20 2 24 4 24 10V18" fill="none" stroke="#9a9a9a" strokeWidth="3" /><rect x="1" y="16" width="28" height="20" rx="3" fill="#696969" /></svg>
              </div>
              <div className="flex items-center pb-[2px] pl-[4px] text-[22px] leading-none text-[#111]">Oggetto</div>
            </div>
            <div className="flex items-start pl-[6px] pt-[6px]">
              <Check checked />
              <div className="ml-[48px]"><Check /></div>
              <div className="ml-[49px]">
                <svg width="34" height="32" viewBox="0 0 40 38"><defs><linearGradient id="mg" x1="0" x2="1"><stop offset="0" stopColor="#f2f2f2" /><stop offset="1" stopColor="#bdbdbd" /></linearGradient></defs><path d="M7 2H2V32C2 35 4 36 7 36H38V4H7Z" fill="url(#mg)" stroke="#a6a6a6" /><path d="M2 5C2 1 7 1 7 5V30C5 28 3 29 2 32Z" fill="#f6f6f6" stroke="#a6a6a6" /></svg>
              </div>
              <span className="ml-[12px] text-[25.5px] font-bold leading-[28px]">Mappa 1</span>
            </div>
          </div>
          <div className="h-[14px] shrink-0" />
          <div className="flex h-[53px] shrink-0 items-end border-b-2 border-[#cdcdcd]">
            <div className="flex h-[50px] w-[122px] items-center rounded-t-[3px] border-x-2 border-t-2 border-[#cdcdcd] bg-[#dcdcdc] pl-[25px] pt-[2px] text-[22px] leading-none">Layout</div>
            <div className="-mb-[2px] flex h-[53px] w-[277px] items-center justify-center border-x-2 border-t-2 border-[#cdcdcd] bg-[#f0f0f0] pt-[2px] text-[22px] leading-none">Proprietà dell&apos;oggetto</div>
            <div className="flex h-[50px] w-[111px] items-center justify-end rounded-t-[3px] border-x-2 border-t-2 border-[#cdcdcd] bg-[#dcdcdc] pr-[24px] pt-[2px] text-[22px] leading-none">Guide</div>
          </div>
          <DockTitle label="Proprietà dell'oggetto" />
          <div className="flex h-[37px] shrink-0 items-center bg-[#c5c5c5] pl-[8px] text-[24px] font-bold leading-none">Mappa 1</div>
          <div className="flex h-[56px] shrink-0 items-center pb-[4px]">
            <Slot c="w-[56px]"><Refresh s={32} /></Slot>
            <Slot c="w-[6px]"><div className="h-[26px] w-[2px] bg-[#dcdcdc]" /></Slot>
            <Slot c="w-[50px]"><MiniFrame mode={0} /></Slot>
            <Slot c="w-[44px]"><MiniFrame mode={1} /></Slot>
            <Slot c="w-[12px]"><div className="h-[26px] w-[2px] bg-[#dcdcdc]" /></Slot>
            <Slot c="w-[50px]"><MiniFrame mode={2} /></Slot>
            <Slot c="w-[44px]"><MiniFrame mode={3} /></Slot>
            <Slot c="w-[12px]"><div className="h-[26px] w-[2px] bg-[#dcdcdc]" /></Slot>
            <Slot c="w-[56px]">
              <Svg w={34} h={36}>
                <path d="M4 2H24V32H4Z" fill="#ececec" stroke="#9a9a9a" strokeWidth="1.5" />
                <rect x="15" y="0" width="8" height="18" fill="#4f86bd" />
                <path d="M14 27H34L24 36Z" fill="#3c3c3c" />
              </Svg>
            </Slot>
            <Slot c="w-[32px]">
              <Svg w={28} h={34}>
                <rect x="2" y="2" width="24" height="30" fill="#e4e4e4" stroke="#999" strokeWidth="1.5" />
                <path d="M14 4L19 11H9ZM7 14H11V20H7ZM17 14H21V20H17ZM11 23H17V28H11Z" fill="#4f86bd" />
              </Svg>
            </Slot>
            <Slot c="w-[24px]"><div className="h-[26px] w-[2px] bg-[#dcdcdc]" /></Slot>
            <Slot c="w-[38px]">
              <svg width="28" height="20" viewBox="0 0 28 20">
                <path d="M5 1H27V19H5L1 10Z" fill="#ecc925" stroke="#c7a51a" />
                <text x="15" y="14" textAnchor="middle" fontSize="11" fill="#5c5c2a" fontFamily="Liberation Sans, sans-serif">abc</text>
              </svg>
            </Slot>
          </div>
          {/* property scroll area */}
          <div className="flex min-h-0 flex-1 overflow-hidden border-l-2 border-t-2 border-[#c8c8c8]">
            <div className="w-[669px] shrink-0 pt-[18px]">
              <SectionHead label="Proprietà Principali" c="h-[40px] -mt-[2px] mb-[2px]" />
              <div className="ml-[21px] mr-[22px] h-[271px] rounded-[3px] border-2 border-[#dcdcdc] bg-[#eeeeee] pl-[22px] pt-[25px] text-[22px] leading-none">
                <div className="flex h-[43px] items-center">
                  <span className="w-[191px] shrink-0 pt-[3px]">Scala</span>
                  <div className="flex h-full w-[317px] items-center rounded-[3px] border-2 border-[#c6c6c6] bg-white pl-[2px] pt-[2px]">420676</div>
                  <div className="ml-[17px]"><Override /></div>
                </div>
                <div className="mt-[19px] flex h-[40px] items-center">
                  <span className="w-[191px] shrink-0 pt-[3px]">Rotazione mappa</span>
                  <div className="flex h-full w-[317px] rounded-[3px] border-2 border-[#c6c6c6] bg-white">
                    <div className="flex flex-1 items-center pl-[6px] pt-[2px]">0.00 °</div>
                    <div className="flex w-[31px] flex-col items-center justify-center gap-[7px] border-l-2 border-[#d0d0d0] bg-[#f6f6f6]">
                      <svg width="16" height="10" viewBox="0 0 16 10"><path d="M0 10H16L8 0Z" fill="#666" /></svg>
                      <svg width="16" height="10" viewBox="0 0 16 10"><path d="M0 0H16L8 10Z" fill="#666" /></svg>
                    </div>
                  </div>
                  <div className="ml-[17px]"><Override /></div>
                </div>
                <div className="mt-[19px] flex h-[47px] items-center">
                  <span className="w-[191px] shrink-0 pt-[3px]">SR</span>
                  <Combo label="Usa il SR del progetto" c="h-full w-[324px]" />
                  <div className="ml-[12px] flex h-full w-[51px] items-center justify-center rounded-[3px] border-2 border-[#d2d2d2] bg-[#f6f6f6]">
                    <Svg w={34} h={36}>
                      <circle cx="16" cy="17" r="15" fill="#bcd6ef" stroke="#8ab0d6" />
                      <path d="M1 17H31M16 2V32M4 9H28M4 25H28M16 2C8 8 8 26 16 32M16 2C24 8 24 26 16 32" fill="none" stroke="#888" />
                      <rect x="20" y="18" width="14" height="17" rx="2" fill="#c8a408" />
                      <path d="M23 32L31 21" stroke="#fff" strokeWidth="2.5" />
                    </Svg>
                  </div>
                </div>
                <div className="mt-[16px] flex h-[30px] items-center">
                  <Check checked />
                  <span className="ml-[11px] pt-[3px]">Disegna oggetti della mappa</span>
                </div>
              </div>
              <SectionHead label="Layer" c="h-[51px] pt-[9px]" />
              <div className="ml-[21px] mr-[22px] h-[212px] rounded-[3px] border-2 border-[#dcdcdc] bg-[#eeeeee] pl-[22px] pt-[25px] text-[22px] leading-none">
                <div className="flex h-[43px] items-center">
                  <Check />
                  <span className="ml-[11px] w-[219px] shrink-0 pt-[3px]">Segui vista mappa</span>
                  <Combo label="(nessuna)" c="h-full w-[248px]" />
                  <div className="ml-[17px]"><Override /></div>
                </div>
                <div className="mt-[15px] flex h-[49px] items-center">
                  <Check />
                  <span className="ml-[11px] w-[418px] shrink-0 pt-[3px]">Blocca layer</span>
                  <div className="flex h-full w-[49px] items-center justify-center rounded-[3px] border-2 border-[#d2d2d2] bg-[#f6f6f6]">
                    <svg width="40" height="36" viewBox="0 0 40 36">
                      <g transform="translate(2 2)"><Eye iris="#6f9bd0" bg="#f4f4f4" /></g>
                      <path d="M22 24H38L30 33Z" fill="#444" />
                    </svg>
                  </div>
                  <div className="ml-[17px]"><Override /></div>
                </div>
                <div className="mt-[17px] flex h-[30px] items-center">
                  <Check disabled />
                  <span className="ml-[11px] pt-[3px] text-[#8e8e8e]">Blocca stili per i layer</span>
                </div>
              </div>
              <SectionHead label="Estensioni" c="h-[51px] pt-[7px]" />
              <div className="ml-[21px] mr-[22px] h-[60px] rounded-[3px] border-2 border-[#dcdcdc] bg-[#eeeeee]" />
            </div>
            <div className="flex w-[33px] shrink-0 flex-col border-l-2 border-[#bdbdbd] bg-[#e4e4e4]">
              <div className="flex h-[31px] items-center justify-center border-b-2 border-[#d0d0d0] bg-[#f4f4f4]">
                <svg width="16" height="11" viewBox="0 0 16 11"><path d="M0 11H16L8 0Z" fill="#444" /></svg>
              </div>
              <div className="h-[309px] border-b-2 border-[#cfcfcf] bg-gradient-to-r from-[#f0f0f0] to-white" />
            </div>
          </div>
        </div>
      </div>

      {/* window edge */}
      <div className="absolute left-0 top-0 h-full w-[2px] bg-[#4d4d4d]" />
      <div className="absolute left-0 top-0 h-[2px] w-full bg-[#4d4d4d]" />

      {/* annotations */}
      <svg width="360" height="120" viewBox="0 0 360 120" className="absolute left-[1934px] top-[646px] drop-shadow-[3px_4px_4px_rgba(0,0,0,0.4)]">
        <path fillRule="evenodd" fill="#c00000" d="M11 60A169 50.5 0 1 0 349 60A169 50.5 0 1 0 11 60ZM25 60A155 40.5 0 1 1 335 60A155 40.5 0 1 1 25 60Z" />
      </svg>
      <div className="absolute left-[2048px] top-[939px] h-[80px] w-[302px] rounded-[16px] border-[9px] border-[#c00000] shadow-[3px_4px_6px_rgba(0,0,0,0.4),inset_3px_4px_6px_rgba(0,0,0,0.3)]" />
    </div>
  );
}
